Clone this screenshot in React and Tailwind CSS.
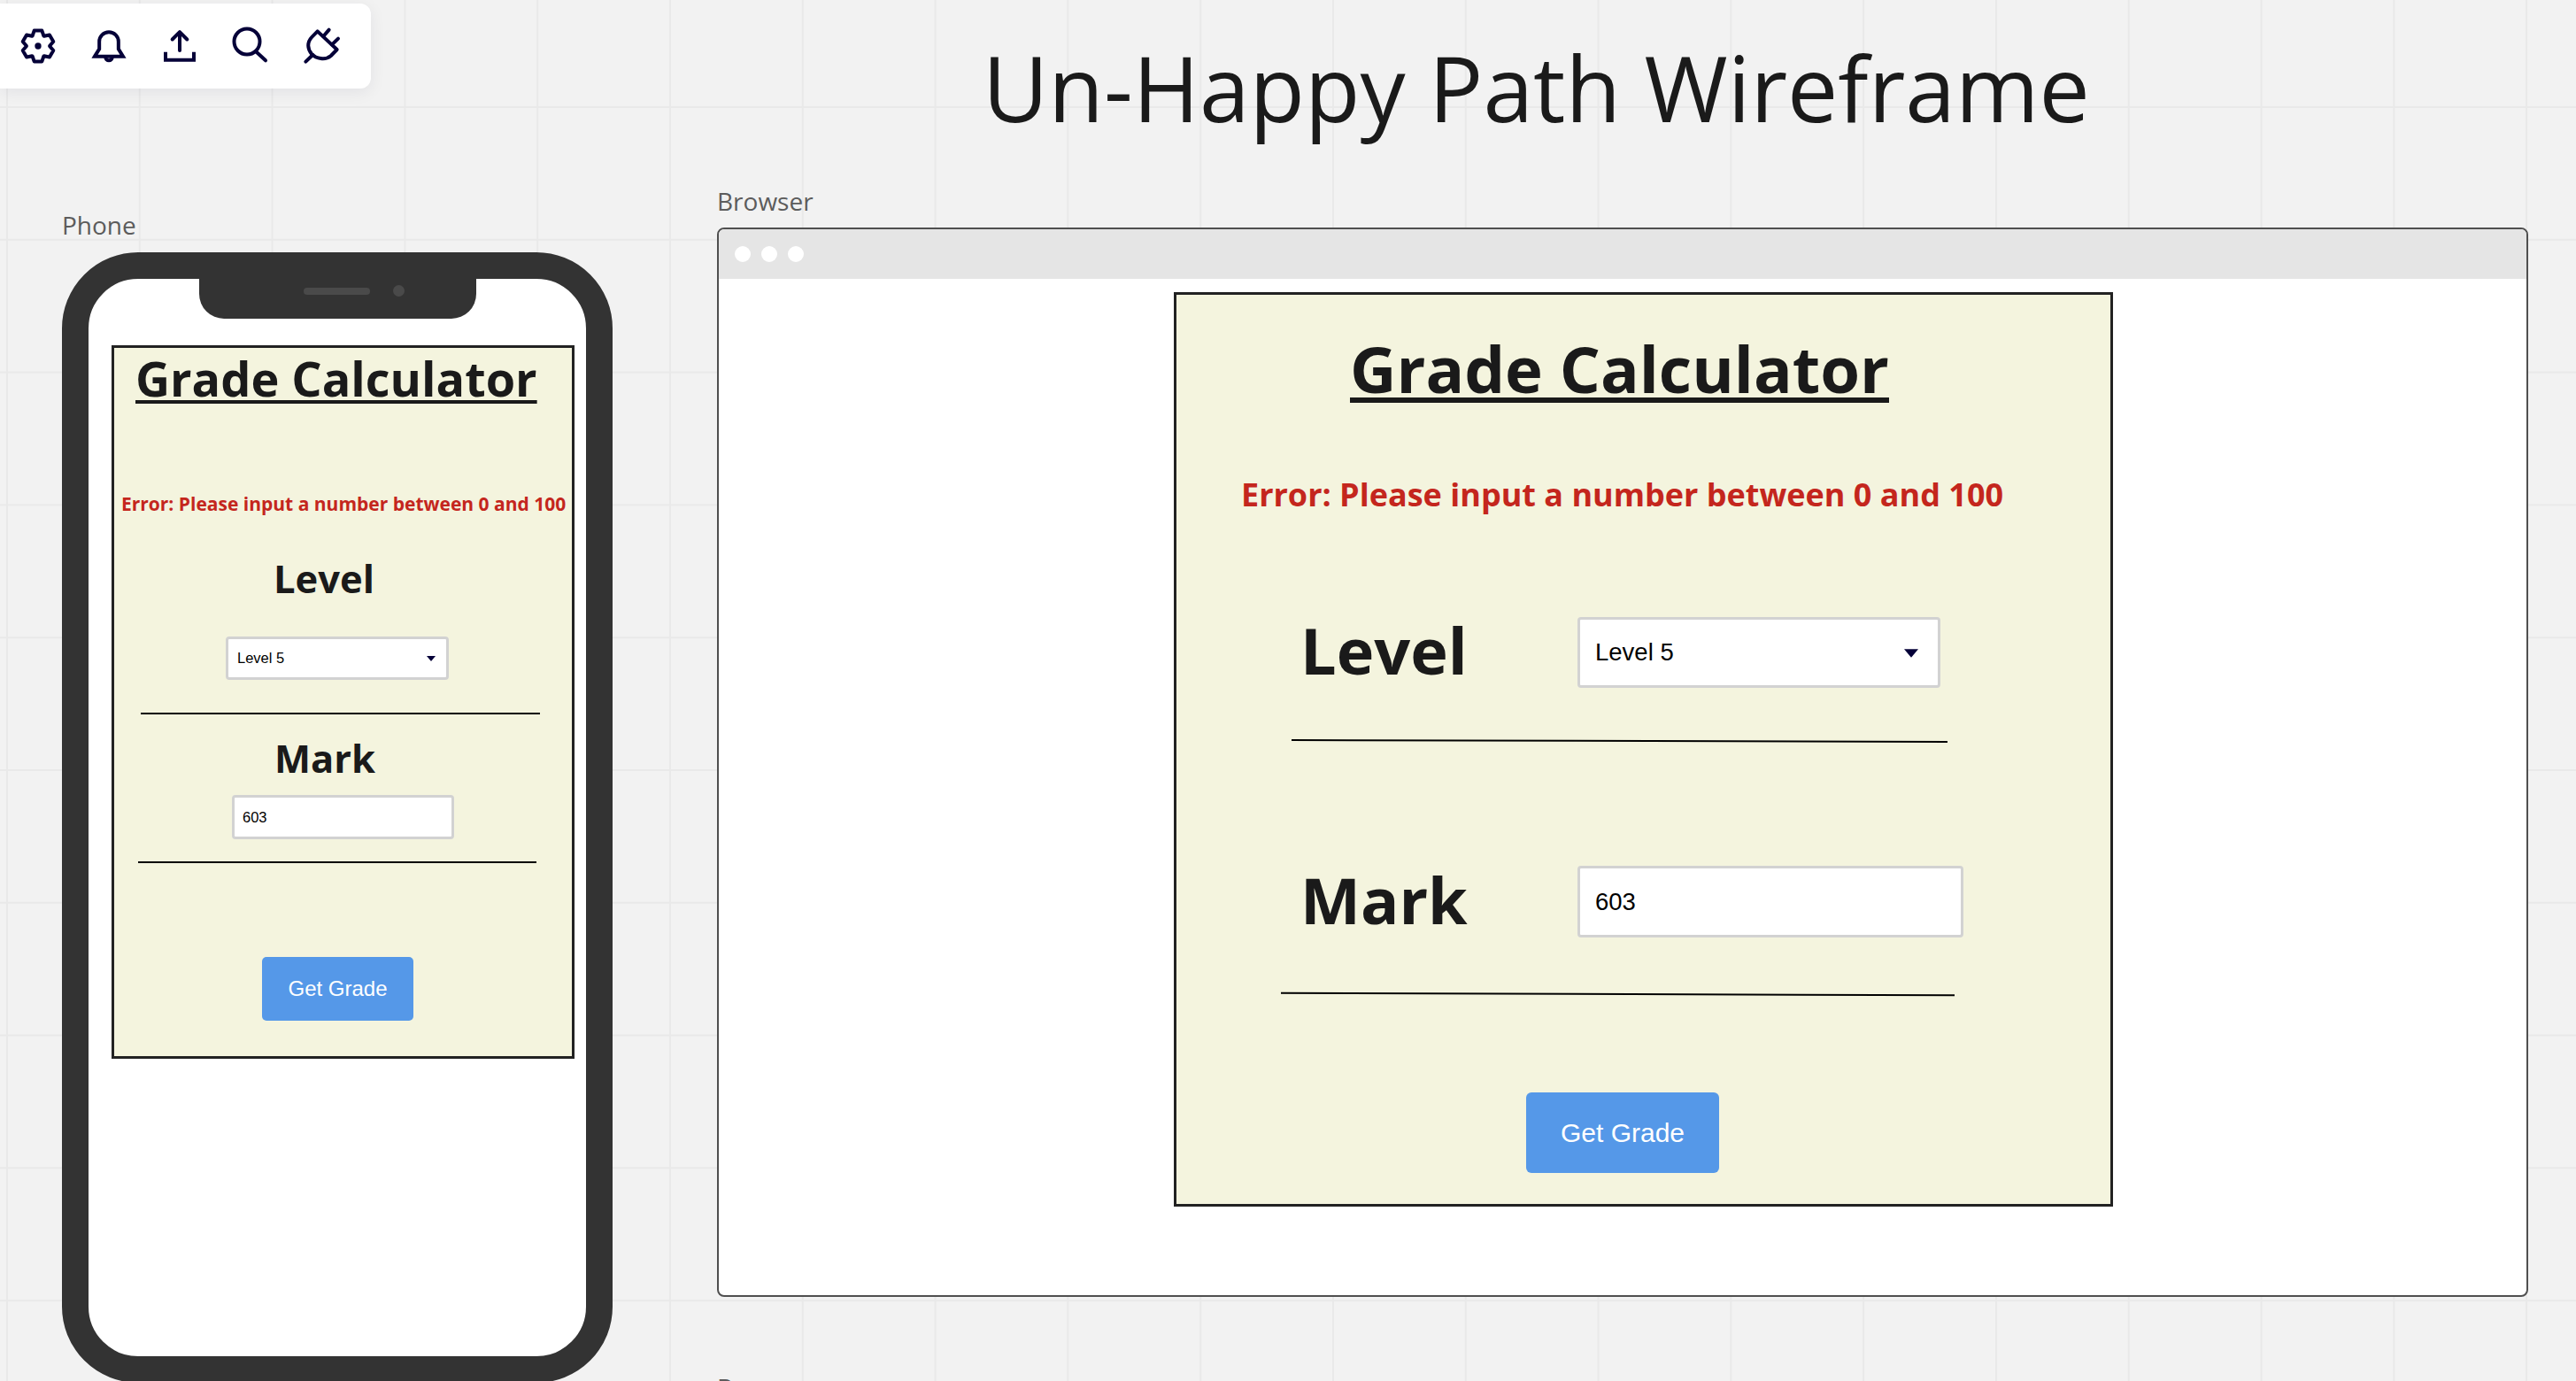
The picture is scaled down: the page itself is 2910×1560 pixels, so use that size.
import React from "react";

const gearPoints = () => {
  const pts = [];
  for (let i = 0; i < 6; i++) {
    const a = -90 + i * 60;
    [[-29, 7.9], [-14, 10.8], [14, 10.8], [29, 7.9]].forEach(([d, r]) => {
      const t = ((a + d) * Math.PI) / 180;
      pts.push(`${(12 + r * Math.cos(t)).toFixed(2)},${(12 + r * Math.sin(t)).toFixed(2)}`);
    });
  }
  return pts.join(" ");
};

const Icon = ({ children }) => (
  <svg
    viewBox="0 0 24 24"
    className="w-10 h-10 shrink-0 overflow-visible"
    fill="none"
    stroke="#050038"
    strokeWidth="2.4"
    strokeLinecap="round"
    strokeLinejoin="round"
  >
    {children}
  </svg>
);

const Toolbar = () => (
  <div className="absolute left-0 top-1 w-[419px] h-24 bg-white rounded-r-xl shadow-[0_4px_18px_rgba(5,0,56,0.07)] flex items-center gap-10 pl-[23px]">
    <Icon>
      <polygon points={gearPoints()} />
      <circle cx="12" cy="12" r="2.2" fill="#050038" stroke="none" />
    </Icon>
    <Icon>
      <path d="M2.4 19 L5.5 14 V9 a6.5 6.5 0 0 1 13 0 V14 L21.6 19 Z" strokeLinejoin="miter" />
      <path d="M9.8 19.6 a2.2 2.2 0 0 0 4.4 0" />
    </Icon>
    <Icon>
      <path d="M2.4 16 V21.4 H21.6 V16" strokeLinecap="butt" strokeLinejoin="miter" />
      <path d="M12 15 V2.5 M7 7.5 L12 2.5 L17 7.5" />
    </Icon>
    <Icon>
      <circle cx="9.6" cy="9" r="8.7" />
      <path d="M16 16 L22.2 21.8" />
    </Icon>
    <Icon>
      <path d="M9.4 2 L22.6 14.4 L18.5 18.6 C14.5 22 8.5 20.5 5.5 17.5 C2.5 14 2.2 9.5 5.5 6 Z" />
      <path d="M13.4 5.4 L17.2 1 M19.2 11 L23.4 7 M1.4 22.6 L6.2 18" />
    </Icon>
  </div>
);

const LevelSelect = ({ className, selectClass, caretClass }) => (
  <div className={`relative ${className}`}>
    <select
      defaultValue="Level 5"
      className={`block appearance-none w-full h-full box-border bg-white border-[3px] border-[#d2d2d2] rounded-[4px] text-black font-normal font-['Liberation_Sans',Arial,sans-serif] outline-none ${selectClass}`}
    >
      <option>Level 4</option>
      <option>Level 5</option>
      <option>Level 6</option>
    </select>
    <svg viewBox="0 0 10 6" className={`absolute ${caretClass}`}>
      <path d="M0 0 H10 L5 6 Z" fill="#050038" />
    </svg>
  </div>
);

const PhoneApp = () => (
  <div className="w-[523px] h-[806px] ml-[26px] mt-[75px] box-border border-[3px] border-[#222222] bg-[#f4f4de] text-[#1a1a1a] font-bold">
    <h2 className="ml-6 mt-0.5 text-[54px] leading-[64px] underline decoration-4 underline-offset-4 whitespace-nowrap">Grade Calculator</h2>
    <p className="ml-2 mt-[95px] text-[21px] leading-[30px] text-[#c4261d] whitespace-nowrap">Error: Please input a number between 0 and 100</p>
    <h3 className="ml-[180px] mt-11 text-[43.5px] leading-[52px]">Level</h3>
    <LevelSelect className="ml-[126px] mt-[39px] w-[252px] h-[49px]" selectClass="text-[16.5px] pl-[10px]" caretClass="right-[15px] top-[22px] w-[10px] h-[6px]" />
    <hr className="ml-[30px] mt-[37px] w-[451px] border-0 h-0.5 bg-black" />
    <h3 className="ml-[181px] mt-6 text-[43.5px] leading-[52px]">Mark</h3>
    <input
      readOnly
      value="603"
      className="block ml-[133px] mt-[15px] w-[251px] h-[50px] box-border bg-white border-[3px] border-[#d2d2d2] rounded-[4px] text-black text-[16.5px] pl-[9px] font-normal font-['Liberation_Sans',Arial,sans-serif] outline-none"
    />
    <hr className="ml-[27px] mt-[25px] w-[450px] border-0 h-0.5 bg-black" />
    <button className="block ml-[167px] mt-[106px] w-[171px] h-[72px] rounded-[5px] bg-[#5598e8] text-white text-2xl font-normal font-['Liberation_Sans',Arial,sans-serif]">Get Grade</button>
  </div>
);

const Phone = () => (
  <div className="absolute left-[70px] top-[285px] w-[622px] h-[1277px] box-border border-[30px] border-[#333333] rounded-[86px] bg-white">
    <div className="absolute left-[125px] top-0 w-[313px] h-[45px] bg-[#333333] rounded-b-[28px] flex items-start">
      <div className="ml-[118px] mt-[10px] w-[75px] h-2 rounded-full bg-[#4a4a4a]" />
      <div className="ml-[26px] mt-[7px] w-[13px] h-[13px] rounded-full bg-[#4a4a4a]" />
    </div>
    <div className="h-px -mb-px" />
    <PhoneApp />
  </div>
);

const BrowserApp = () => (
  <div className="w-[1061px] h-[1033px] ml-[514px] mt-[15px] box-border border-[3px] border-[#222222] bg-[#f4f4de] text-[#1a1a1a] font-bold">
    <h2 className="ml-[196px] mt-[41px] text-[72.5px] leading-[84px] underline decoration-[6px] underline-offset-[5px] whitespace-nowrap">Grade Calculator</h2>
    <p className="ml-[73px] mt-[76px] text-[36px] leading-[50px] text-[#c4261d] whitespace-nowrap">Error: Please input a number between 0 and 100</p>
    <div className="flex items-start ml-[140px] mt-[108px]">
      <h3 className="w-[313px] text-[72px] leading-[84px]">Level</h3>
      <LevelSelect className="mt-[5px] w-[410px] h-[80px]" selectClass="text-[27.5px] pl-[17px]" caretClass="right-[25px] top-[36px] w-4 h-[10px]" />
    </div>
    <hr className="ml-[130px] mt-[59px] w-[741px] border-0 h-0.5 bg-black rotate-[0.15deg]" />
    <div className="flex items-start ml-[140px] mt-[136px]">
      <h3 className="w-[313px] text-[72px] leading-[84px]">Mark</h3>
      <input
        readOnly
        value="603"
        className="mt-1 w-[436px] h-[81px] box-border bg-white border-[3px] border-[#d2d2d2] rounded-[4px] text-black text-[27.5px] pl-[17px] font-normal font-['Liberation_Sans',Arial,sans-serif] outline-none"
      />
    </div>
    <hr className="ml-[118px] mt-[63px] w-[761px] border-0 h-0.5 bg-black rotate-[0.2deg]" />
    <button className="block ml-[395px] mt-[110px] w-[218px] h-[91px] rounded-md bg-[#5598e8] text-white text-[30px] font-normal font-['Liberation_Sans',Arial,sans-serif]">Get Grade</button>
  </div>
);

const Browser = () => (
  <div className="absolute left-[810px] top-[257px] w-[2046px] h-[1208px] box-border border-2 border-[#4f4f4f] rounded-lg bg-white overflow-hidden">
    <div className="h-[56px] bg-[#e5e5e5] flex items-center gap-3 pl-[18px]">
      <span className="w-[18px] h-[18px] rounded-full bg-white" />
      <span className="w-[18px] h-[18px] rounded-full bg-white" />
      <span className="w-[18px] h-[18px] rounded-full bg-white" />
    </div>
    <BrowserApp />
  </div>
);

const App = () => {
  return (
    <div className="relative w-[2910px] h-[1560px] overflow-hidden font-['Open_Sans',sans-serif] bg-[#f2f2f2] bg-[linear-gradient(to_right,#e9e9e9_2px,transparent_2px),linear-gradient(to_bottom,#e9e9e9_2px,transparent_2px)] bg-[size:149.8px_149.8px] bg-[position:7px_120px]">
      <Toolbar />
      <h1 className="absolute left-[1110px] top-[39px] text-[102px] leading-[120px] text-[#1a1a1a] whitespace-nowrap">Un-Happy Path Wireframe</h1>
      <span className="absolute left-[70px] top-[235px] text-[28px] leading-[38px] text-[#5c5c5c]">Phone</span>
      <Phone />
      <span className="absolute left-[810px] top-[208px] text-[28px] leading-[38px] text-[#5c5c5c]">Browser</span>
      <Browser />
      <span className="absolute left-[810px] top-[1548px] text-[28px] leading-[38px] text-[#5c5c5c]">Browser</span>
    </div>
  );
};

export default App;
